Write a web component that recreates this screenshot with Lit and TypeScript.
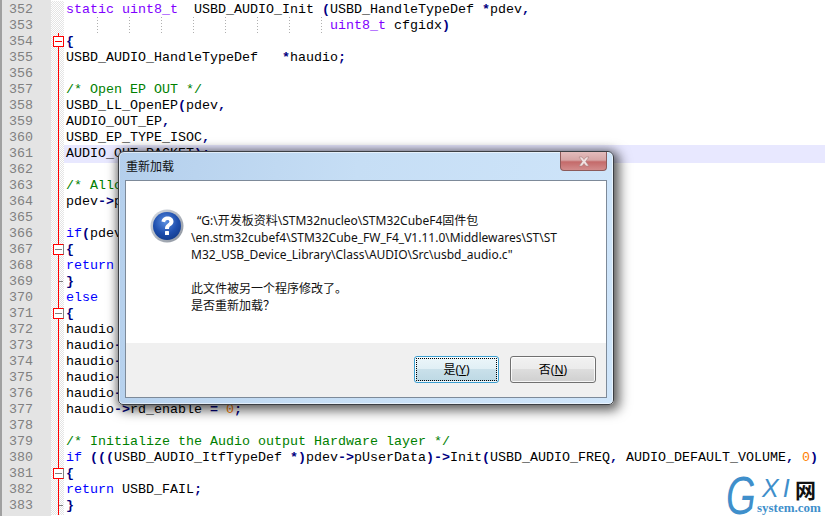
import { LitElement, html, css, nothing } from "lit";
import { customElement } from "lit/decorators.js";

type Fold = "" | "box" | "boxg" | "tick";
type Seg = [string, string];
const K = "k", T = "t", O = "o", C = "c", N = "n", P = "";

const rows: { n: number; fold: Fold; segs: Seg[]; cls?: string }[] = [
  { n: 352, fold: "", segs: [[T, "static uint8_t"], [P, "  USBD_AUDIO_Init "], [O, "("], [P, "USBD_HandleTypeDef "], [O, "*"], [P, "pdev"], [O, ","]] },
  { n: 353, fold: "", cls: "guides", segs: [[P, "                                 "], [T, "uint8_t"], [P, " cfgidx"], [O, ")"]] },
  { n: 354, fold: "box", segs: [[O, "{"]] },
  { n: 355, fold: "", segs: [[P, "USBD_AUDIO_HandleTypeDef   "], [O, "*"], [P, "haudio"], [O, ";"]] },
  { n: 356, fold: "", segs: [] },
  { n: 357, fold: "", segs: [[C, "/* Open EP OUT */"]] },
  { n: 358, fold: "", segs: [[P, "USBD_LL_OpenEP"], [O, "("], [P, "pdev"], [O, ","]] },
  { n: 359, fold: "", segs: [[P, "AUDIO_OUT_EP"], [O, ","]] },
  { n: 360, fold: "", segs: [[P, "USBD_EP_TYPE_ISOC"], [O, ","]] },
  { n: 361, fold: "", cls: "cur", segs: [[P, "AUDIO_OUT_PACKET"], [O, ");"]] },
  { n: 362, fold: "", segs: [] },
  { n: 363, fold: "", segs: [[C, "/* Allocate Audio structure */"]] },
  { n: 364, fold: "", segs: [[P, "pdev"], [O, "->"], [P, "pClassData "], [O, "="], [P, " USBD_malloc"], [O, "("], [K, "sizeof"], [O, "("], [P, "USBD_AUDIO_HandleTypeDef"], [O, "));"]] },
  { n: 365, fold: "", segs: [] },
  { n: 366, fold: "", segs: [[K, "if"], [O, "("], [P, "pdev"], [O, "->"], [P, "pClassData "], [O, "=="], [P, " NULL"], [O, ")"]] },
  { n: 367, fold: "boxg", segs: [[O, "{"]] },
  { n: 368, fold: "", segs: [[K, "return"], [P, " USBD_FAIL"], [O, ";"]] },
  { n: 369, fold: "tick", segs: [[O, "}"]] },
  { n: 370, fold: "", segs: [[K, "else"]] },
  { n: 371, fold: "boxg", segs: [[O, "{"]] },
  { n: 372, fold: "", segs: [[P, "haudio "], [O, "="], [P, " pdev"], [O, "->"], [P, "pClassData"], [O, ";"]] },
  { n: 373, fold: "", segs: [[P, "haudio"], [O, "->"], [P, "alt_setting "], [O, "="], [P, " "], [N, "0"], [O, ";"]] },
  { n: 374, fold: "", segs: [[P, "haudio"], [O, "->"], [P, "offset "], [O, "="], [P, " AUDIO_OFFSET"], [O, ";"]] },
  { n: 375, fold: "", segs: [[P, "haudio"], [O, "->"], [P, "wr_ptr "], [O, "="], [P, " "], [N, "0"], [O, ";"]] },
  { n: 376, fold: "", segs: [[P, "haudio"], [O, "->"], [P, "rd_ptr "], [O, "="], [P, " "], [N, "0"], [O, ";"]] },
  { n: 377, fold: "", segs: [[P, "haudio"], [O, "->"], [P, "rd_enable "], [O, "="], [P, " "], [N, "0"], [O, ";"]] },
  { n: 378, fold: "", segs: [] },
  { n: 379, fold: "", segs: [[C, "/* Initialize the Audio output Hardware layer */"]] },
  { n: 380, fold: "", segs: [[K, "if"], [P, " "], [O, "((("], [P, "USBD_AUDIO_ItfTypeDef "], [O, "*)"], [P, "pdev"], [O, "->"], [P, "pUserData"], [O, ")->"], [P, "Init"], [O, "("], [P, "USBD_AUDIO_FREQ"], [O, ","], [P, " AUDIO_DEFAULT_VOLUME"], [O, ","], [P, " "], [N, "0"], [O, ")"]] },
  { n: 381, fold: "boxg", segs: [[O, "{"]] },
  { n: 382, fold: "", segs: [[K, "return"], [P, " USBD_FAIL"], [O, ";"]] },
  { n: 383, fold: "tick", segs: [[O, "}"]] },
];

const GUIDE = "repeating-linear-gradient(#b0b0b0 0 1px, transparent 1px 3px)";

@customElement("app-root")
export class AppRoot extends LitElement {
  static styles = css`
    :host { display: block; position: relative; width: 825px; height: 516px; overflow: hidden;
      background: linear-gradient(to right, #a0a0a0 2px, #e4e4e4 2px 51px, #fff 51px); }
    .editor { display: flex; flex-direction: column; margin-top: 1px; padding-left: 2px;
      font: 13.33px/18px "Liberation Mono", monospace; color: #000; }
    .row { display: grid; grid-template-columns: 49px 13px 1fr; height: 16px; }
    .num { background: #e4e4e4; color: #808080; padding-left: 7px; overflow: visible; }
    .fold { position: relative; background-color: #fff;
      background-image: conic-gradient(#e4e4e4 25%, #fff 0 50%, #e4e4e4 0 75%, #fff 0);
      background-size: 2px 2px; }
    .line::before { content: ""; position: absolute; left: 7px; top: 0; bottom: 0; width: 1px; background: #f00; }
    .box { position: absolute; left: 2px; top: 3px; width: 11px; height: 11px; box-sizing: border-box;
      border: 1px solid #f00; background: #fff; z-index: 1; }
    .box::after { content: ""; position: absolute; left: 1px; right: 1px; top: 4px; height: 1px; background: #f00; }
    .box.gray { border-right-color: #808080; }
    .box.gray::after { background: #808080; }
    .tick::after { content: ""; position: absolute; left: 8px; top: 8px; width: 4px; height: 1px; background: #808080; }
    .code { padding-left: 2px; white-space: pre; min-width: 0; }
    .cur .code { background: #e8e8ff; }
    .guides .code { background-repeat: no-repeat; background-size: 1px 100%; }
    .k { color: #0000ff; }
    .t { color: #8000ff; }
    .o { color: #000080; font-weight: bold; }
    .c { color: #008000; }
    .n { color: #ff8000; }

    .window { position: absolute; left: 118px; top: 151px; width: 496px; height: 254px; box-sizing: border-box;
      display: grid; grid-template-rows: 28px 1fr; padding: 0 6px 6px 6px;
      border: 1px solid #3c3f44; border-radius: 6px 6px 5px 5px;
      background: linear-gradient(100deg, #b4cfec 0%, #c6def5 45%, #cfe5fa 100%);
      box-shadow: 3px 3px 12px 3px rgba(0,0,0,.55), 0 0 8px rgba(0,0,0,.25), inset 0 0 0 1px rgba(255,255,255,.55); }
    .title { font: 12px/28px "Noto Sans CJK SC", sans-serif; color: #111; padding-left: 1px; }
    .close { position: absolute; right: 6px; top: 0; width: 47px; height: 19px; box-sizing: border-box;
      display: flex; align-items: center; justify-content: center;
      border: 1px solid #8c5a5a; border-top: 0; border-radius: 0 0 4px 4px;
      background: linear-gradient(#e3bcbc 0%, #d6a5a5 45%, #c46a6a 55%, #d28c8c 100%); }
    .inner { display: grid; grid-template-rows: 162px 1fr; border: 1px solid #7d8a99; background: #fff; min-height: 0; }
    .content { display: flex; padding: 28px 0 0 24px; gap: 7px; }
    .icon { width: 34px; height: 34px; flex: none; }
    .msg { font: 12px/17px "Noto Sans", "Noto Sans CJK SC", sans-serif; color: #111; margin-top: 3px; white-space: pre; }
    .first { padding-left: 6px; }
    .footer { background: #f0f0f0; display: flex; justify-content: flex-end; align-items: flex-start; gap: 11px;
      padding: 13px 10px 0 0; }
    .btn { box-sizing: border-box; width: 86px; height: 27px; border-radius: 3px; display: flex; align-items: center; justify-content: center;
      font: 12px/1 "Noto Sans", "Noto Sans CJK SC", sans-serif; color: #000; position: relative;
      border: 1px solid #707070; background: linear-gradient(#f2f2f2 0%, #ebebeb 48%, #dddddd 50%, #cfcfcf 100%);
      box-shadow: inset 0 0 0 1px rgba(255,255,255,.8); }
    .btn.def { width: 85px; border-color: #3c9fd0; background: linear-gradient(#ecf6fa 0%, #e0eff5 48%, #c9e0ea 50%, #bcd8e4 100%); }
    .btn.def::after { content: ""; position: absolute; inset: 1px; border: 1px dotted #000; border-radius: 1px; }
    u { text-decoration: underline; text-underline-offset: 1px; }

    .mark { position: absolute; left: 727px; top: 472px; width: 98px; height: 44px; }
    .mg { position: absolute; left: -1px; top: -1px; font: italic 53px/50px "Liberation Sans", sans-serif; color: #3f8fcb;
      transform: scaleX(.72); transform-origin: left center; }
    .xi { position: absolute; left: 35px; top: 3px; font: italic 25px/27px "Liberation Sans", sans-serif; color: #3f8fcb; letter-spacing: 4px; }
    .wang { position: absolute; left: 68px; top: 4px; font: bold 21px/26px "Noto Sans CJK SC", sans-serif; color: #111; }
    .sys { position: absolute; left: 30px; top: 28px; font: bold 13px/16px "Liberation Serif", serif; color: #3f8fcb; }
  `;

  private guideStyle() {
    const pos = [33, 65, 97, 129, 161, 193, 225, 257];
    return `background-image:${pos.map(() => GUIDE).join(",")};background-position:${pos.map((p) => p + "px 0").join(",")}`;
  }

  private foldCell(f: Fold, n: number) {
    return html`<div class="fold ${n >= 354 ? "line" : ""} ${f === "tick" ? "tick" : ""}">
      ${f === "box" || f === "boxg" ? html`<div class="box ${f === "boxg" ? "gray" : ""}"></div>` : nothing}
    </div>`;
  }

  render() {
    return html`
      <div class="editor">
        ${rows.map((r) => html`<div class="row ${r.cls ?? ""}">
          <div class="num">${r.n}</div>
          ${this.foldCell(r.fold, r.n)}
          <div class="code" style=${r.cls === "guides" ? this.guideStyle() : ""}>${r.segs.map(([c, t]) => html`<span class=${c}>${t}</span>`)}</div>
        </div>`)}
      </div>
      <div class="window">
        <div class="title">重新加载</div>
        <div class="close">
          <svg width="14" height="11" viewBox="0 0 14 11"><path d="M2 1h3l2 2.5L9 1h3L8.7 5.5 12 10H9L7 7.5 5 10H2l3.3-4.5z" fill="#f1e3e3" stroke="#a87c7c" stroke-width=".6"/></svg>
        </div>
        <div class="inner">
          <div class="content">
            <svg class="icon" viewBox="0 0 34 34">
              <defs>
                <radialGradient id="q" cx="45%" cy="35%" r="70%"><stop offset="0" stop-color="#5b8fe0"/><stop offset=".6" stop-color="#1f4fae"/><stop offset="1" stop-color="#123a8a"/></radialGradient>
                <linearGradient id="r" x1="0" y1="0" x2="1" y2="1"><stop offset="0" stop-color="#d8dde4"/><stop offset="1" stop-color="#8a919c"/></linearGradient>
              </defs>
              <circle cx="17" cy="17" r="16.5" fill="url(#r)"/>
              <circle cx="17" cy="17" r="14" fill="url(#q)"/>
              <path d="M11.5 12.5C12 9 14.5 7.5 17.5 7.5c3.6 0 6 2 6 5 0 2.4-1.4 3.5-3 4.6-1.1.8-1.5 1.3-1.5 2.9h-4c0-2.8.7-3.9 2.4-5.1 1.2-.9 2-1.4 2-2.3 0-1-.8-1.6-1.9-1.6-1.3 0-2.1.8-2.4 2.2z" fill="#fff"/>
              <rect x="15" y="22" width="4" height="4" rx=".5" fill="#fff"/>
            </svg>
            <div class="msg"><span class="first">“G:\\开发板资料\\STM32nucleo\\STM32CubeF4固件包</span>
\\en.stm32cubef4\\STM32Cube_FW_F4_V1.11.0\\Middlewares\\ST\\ST
M32_USB_Device_Library\\Class\\AUDIO\\Src\\usbd_audio.c"

此文件被另一个程序修改了。
是否重新加载？</div>
          </div>
          <div class="footer">
            <div class="btn def"><span>是(<u>Y</u>)</span></div>
            <div class="btn"><span>否(<u>N</u>)</span></div>
          </div>
        </div>
      </div>
      <div class="mark">
        <span class="mg">G</span><span class="xi">XI</span><span class="wang">网</span><span class="sys">system.com</span>
      </div>
    `;
  }
}
